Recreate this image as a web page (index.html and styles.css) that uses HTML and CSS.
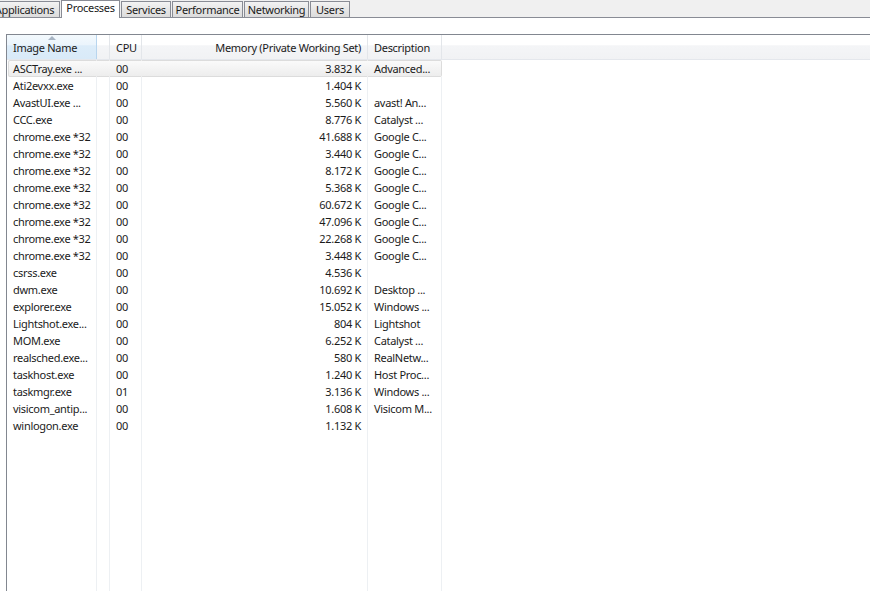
FILE: index.html
```html
<!DOCTYPE html>
<html>
<head>
<meta charset="utf-8">
<link rel="stylesheet" href="styles.css">
</head>
<body>
<div class="tabstrip">
  <div class="tab tab-apps">Applications</div>
  <div class="tab tab-proc selected">Processes</div>
  <div class="tab tab-serv">Services</div>
  <div class="tab tab-perf">Performance</div>
  <div class="tab tab-net">Networking</div>
  <div class="tab tab-users">Users</div>
</div>
<div class="page">
  <div class="list">
    <div class="header">
      <div class="hcell sorted"><span class="arrow"></span>Image Name</div>
      <div class="hcell"></div>
      <div class="hcell">CPU</div>
      <div class="hcell right">Memory (Private Working Set)</div>
      <div class="hcell">Description</div>
      <div class="hcell last"></div>
    </div>
    <div class="rows">
      <div class="row sel"><div class="c">ASCTray.exe ...</div><div class="c"></div><div class="c">00</div><div class="c r">3.832 K</div><div class="c">Advanced...</div><div class="c last"></div></div>
      <div class="row"><div class="c">Ati2evxx.exe</div><div class="c"></div><div class="c">00</div><div class="c r">1.404 K</div><div class="c"></div><div class="c last"></div></div>
      <div class="row"><div class="c">AvastUI.exe ...</div><div class="c"></div><div class="c">00</div><div class="c r">5.560 K</div><div class="c">avast! An...</div><div class="c last"></div></div>
      <div class="row"><div class="c">CCC.exe</div><div class="c"></div><div class="c">00</div><div class="c r">8.776 K</div><div class="c">Catalyst ...</div><div class="c last"></div></div>
      <div class="row"><div class="c">chrome.exe *32</div><div class="c"></div><div class="c">00</div><div class="c r">41.688 K</div><div class="c">Google C...</div><div class="c last"></div></div>
      <div class="row"><div class="c">chrome.exe *32</div><div class="c"></div><div class="c">00</div><div class="c r">3.440 K</div><div class="c">Google C...</div><div class="c last"></div></div>
      <div class="row"><div class="c">chrome.exe *32</div><div class="c"></div><div class="c">00</div><div class="c r">8.172 K</div><div class="c">Google C...</div><div class="c last"></div></div>
      <div class="row"><div class="c">chrome.exe *32</div><div class="c"></div><div class="c">00</div><div class="c r">5.368 K</div><div class="c">Google C...</div><div class="c last"></div></div>
      <div class="row"><div class="c">chrome.exe *32</div><div class="c"></div><div class="c">00</div><div class="c r">60.672 K</div><div class="c">Google C...</div><div class="c last"></div></div>
      <div class="row"><div class="c">chrome.exe *32</div><div class="c"></div><div class="c">00</div><div class="c r">47.096 K</div><div class="c">Google C...</div><div class="c last"></div></div>
      <div class="row"><div class="c">chrome.exe *32</div><div class="c"></div><div class="c">00</div><div class="c r">22.268 K</div><div class="c">Google C...</div><div class="c last"></div></div>
      <div class="row"><div class="c">chrome.exe *32</div><div class="c"></div><div class="c">00</div><div class="c r">3.448 K</div><div class="c">Google C...</div><div class="c last"></div></div>
      <div class="row"><div class="c">csrss.exe</div><div class="c"></div><div class="c">00</div><div class="c r">4.536 K</div><div class="c"></div><div class="c last"></div></div>
      <div class="row"><div class="c">dwm.exe</div><div class="c"></div><div class="c">00</div><div class="c r">10.692 K</div><div class="c">Desktop ...</div><div class="c last"></div></div>
      <div class="row"><div class="c">explorer.exe</div><div class="c"></div><div class="c">00</div><div class="c r">15.052 K</div><div class="c">Windows ...</div><div class="c last"></div></div>
      <div class="row"><div class="c">Lightshot.exe...</div><div class="c"></div><div class="c">00</div><div class="c r">804 K</div><div class="c">Lightshot</div><div class="c last"></div></div>
      <div class="row"><div class="c">MOM.exe</div><div class="c"></div><div class="c">00</div><div class="c r">6.252 K</div><div class="c">Catalyst ...</div><div class="c last"></div></div>
      <div class="row"><div class="c">realsched.exe...</div><div class="c"></div><div class="c">00</div><div class="c r">580 K</div><div class="c">RealNetw...</div><div class="c last"></div></div>
      <div class="row"><div class="c">taskhost.exe</div><div class="c"></div><div class="c">00</div><div class="c r">1.240 K</div><div class="c">Host Proc...</div><div class="c last"></div></div>
      <div class="row"><div class="c">taskmgr.exe</div><div class="c"></div><div class="c">01</div><div class="c r">3.136 K</div><div class="c">Windows ...</div><div class="c last"></div></div>
      <div class="row"><div class="c">visicom_antip...</div><div class="c"></div><div class="c">00</div><div class="c r">1.608 K</div><div class="c">Visicom M...</div><div class="c last"></div></div>
      <div class="row"><div class="c">winlogon.exe</div><div class="c"></div><div class="c">00</div><div class="c r">1.132 K</div><div class="c"></div><div class="c last"></div></div>
      <div class="row filler"><div class="c"></div><div class="c"></div><div class="c"></div><div class="c"></div><div class="c"></div><div class="c last"></div></div>
    </div>
  </div>
</div>
</body>
</html>
```

FILE: styles.css
```css
html, body {
  margin: 0;
  height: 100%;
  overflow: hidden;
}
body {
  background: #f0f0f0;
  font-family: "Noto Sans", "DejaVu Sans", sans-serif;
  font-size: 11px;
  letter-spacing: -0.3px;
  color: #1b1b1b;
  display: flex;
  flex-direction: column;
}
.tabstrip {
  display: flex;
  align-items: flex-end;
  gap: 1px;
  height: 17px;
  border-bottom: 1px solid #898c95;
  margin-left: -11px;
  flex: none;
}
.tab {
  box-sizing: border-box;
  height: 16px;
  line-height: 15px;
  border: 1px solid #898c95;
  border-bottom: none;
  background: linear-gradient(#f3f3f3, #e6e6e6 50%, #dcdcdc);
  text-align: center;
  padding: 0;
  flex: none;
  white-space: nowrap;
}
.tab-apps { width: 71px; }
.tab-proc { width: 59px; }
.tab-serv { width: 50px; }
.tab-perf { width: 71px; }
.tab-net { width: 65px; }
.tab-users { width: 40px; }
.tab.selected {
  height: 18px;
  margin-bottom: -1px;
  background: #ffffff;
  line-height: 14px;
  position: relative;
}
.page {
  flex: 1;
  background: #ffffff;
  padding: 16px 0 0 6px;
  display: flex;
  flex-direction: column;
}
.list {
  flex: 1;
  border-top: 1px solid #828790;
  border-left: 1px solid #828790;
  display: flex;
  flex-direction: column;
}
.header, .row {
  display: grid;
  grid-template-columns: 90px 13px 32px 226px 74px 1fr;
}
.header {
  height: 24px;
  background: linear-gradient(#ffffff, #ffffff 40%, #f4f5f7 45%, #f1f2f4);
  border-bottom: 1px solid #e4e7ec;
  flex: none;
}
.hcell {
  position: relative;
  line-height: 25px;
  padding: 0 6px;
  border-right: 1px solid #e3e6ea;
  white-space: nowrap;
  overflow: hidden;
}
.hcell.sorted {
  background: linear-gradient(#f3f9fd, #ebf4fc 40%, #dcecf9 45%, #d9eaf8);
  border-right-color: #b8d5ee;
}
.hcell.right { text-align: right; }
.hcell.last { border-right: none; }
.arrow {
  position: absolute;
  left: 41px;
  top: 1px;
  width: 0;
  height: 0;
  border-left: 4px solid transparent;
  border-right: 4px solid transparent;
  border-bottom: 4px solid #a7b4c3;
}
.rows {
  flex: 1;
  display: flex;
  flex-direction: column;
}
.row {
  height: 17px;
  flex: none;
}
.row.filler {
  flex: 1;
}
.c {
  line-height: 17px;
  padding: 0 6px;
  border-right: 1px solid #edf0f3;
  white-space: nowrap;
  overflow: hidden;
}
.c.r { text-align: right; }
.c.last { border-right: none; }
.row.sel .c:not(.last) {
  background: linear-gradient(#fafafa, #ededed);
  border-top: 1px solid #dcdcdc;
  border-bottom: 1px solid #dcdcdc;
  border-right-color: transparent;
  line-height: 15px;
}
.row.sel .c:first-child {
  border-left: 1px solid #dcdcdc;
  border-radius: 2px 0 0 2px;
  margin-left: 1px;
  padding-left: 4px;
}
.row.sel .c:nth-child(5) {
  border-right-color: #dcdcdc;
  border-radius: 0 2px 2px 0;
}
```
